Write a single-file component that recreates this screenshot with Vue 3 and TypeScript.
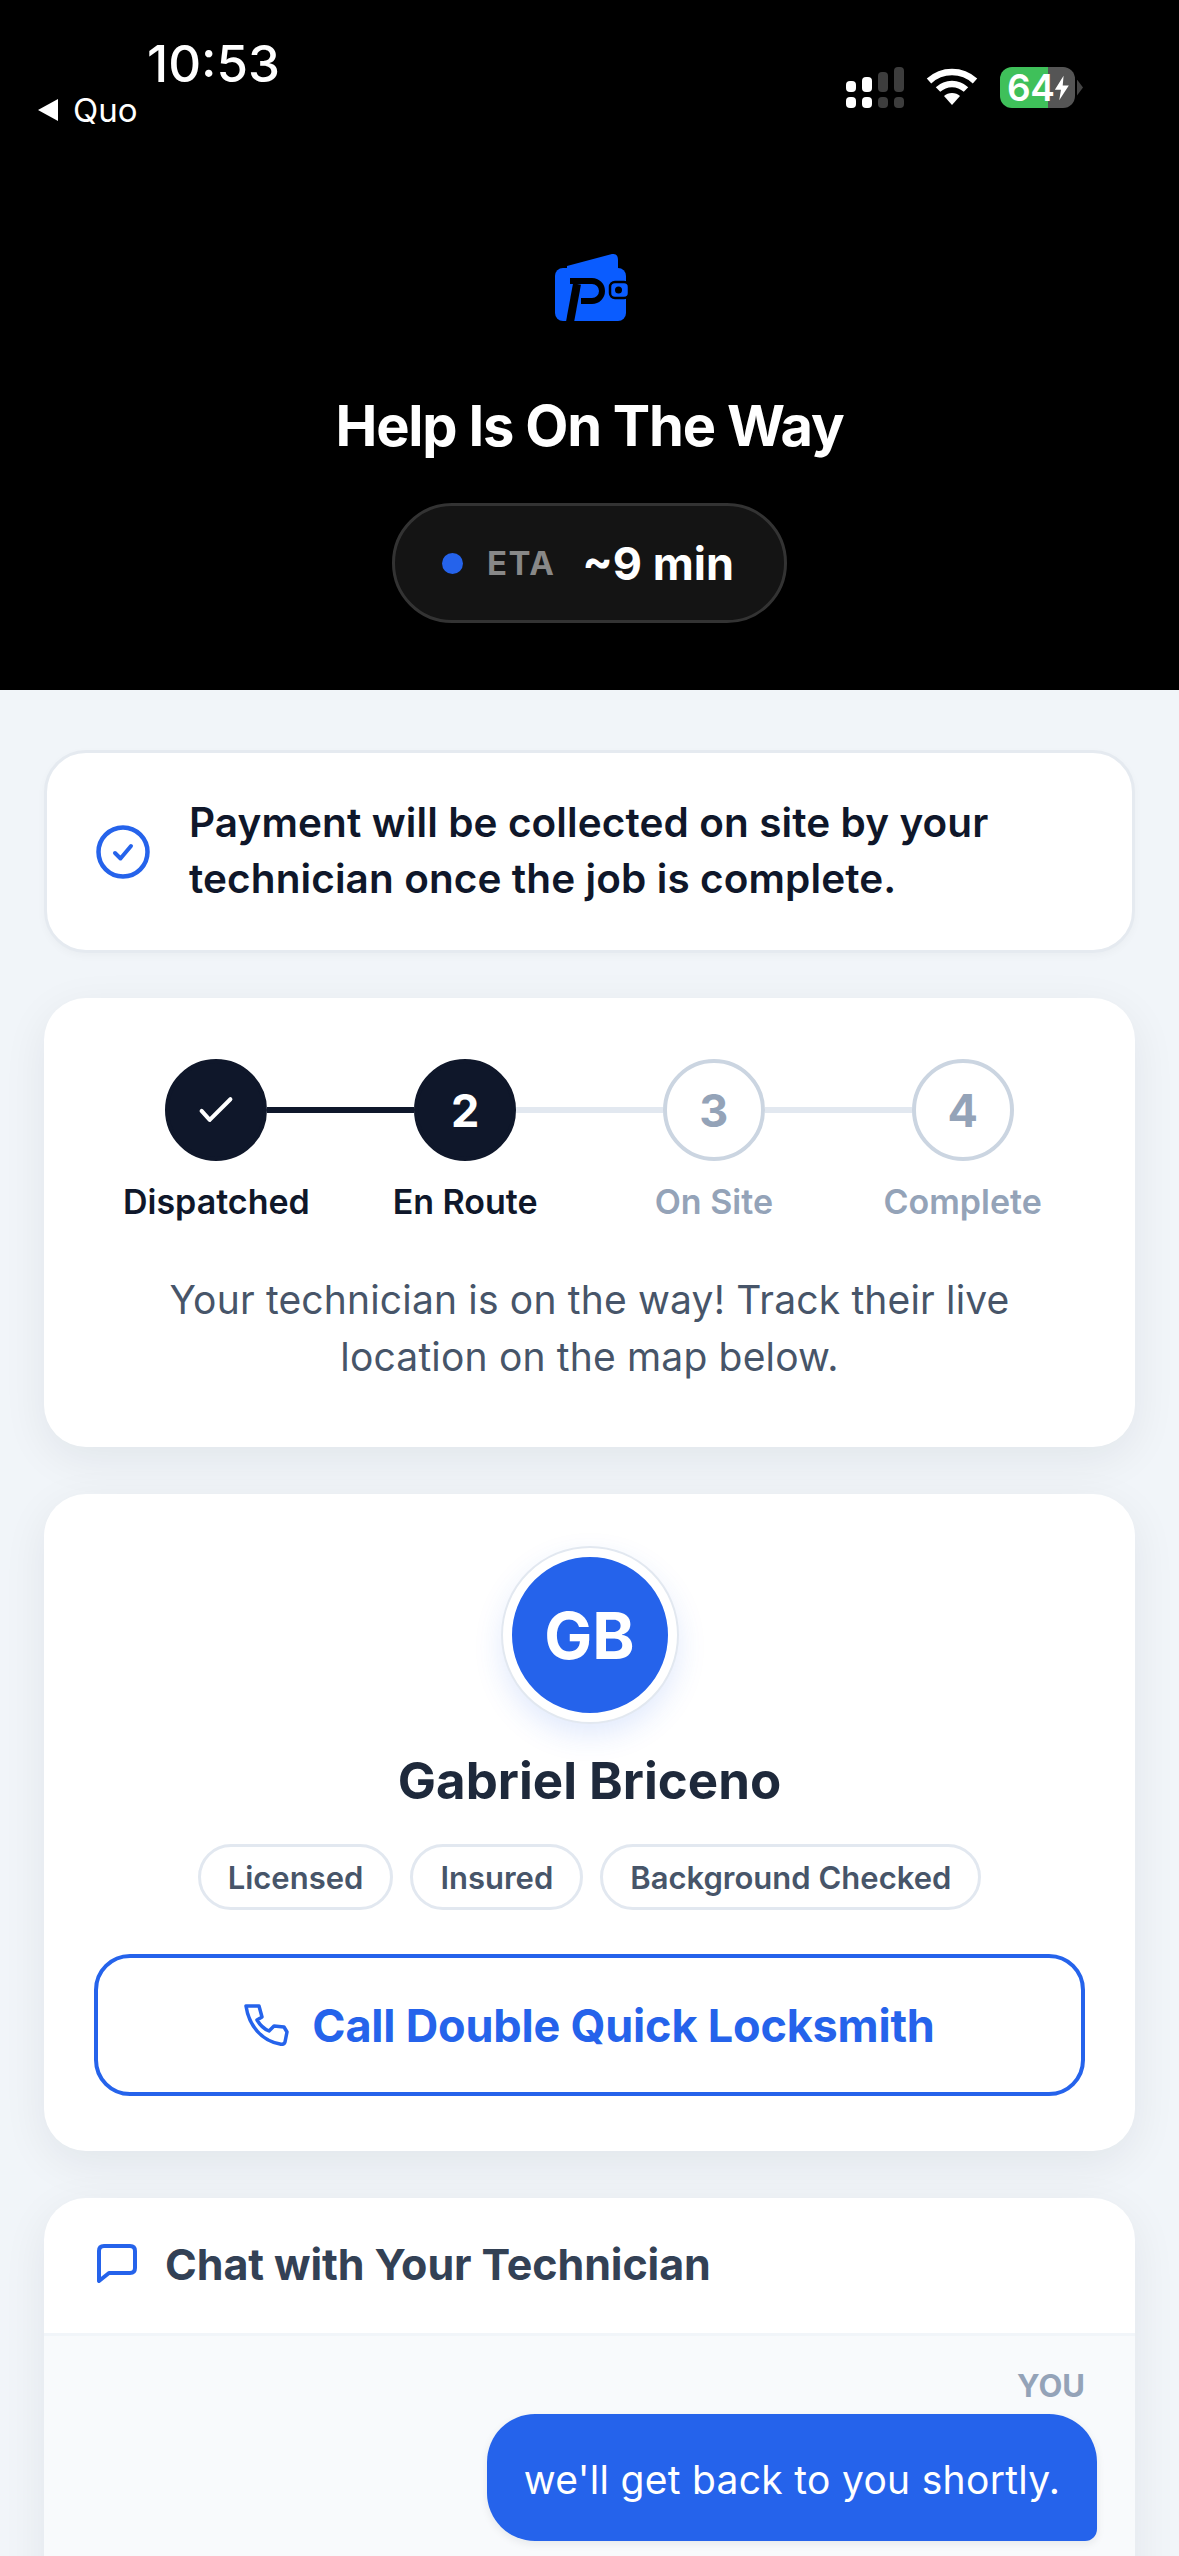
<script setup lang="ts">
interface Step {
  label: string
  mark: string
  state: 'done' | 'current' | 'todo'
}

const steps: Step[] = [
  { label: 'Dispatched', mark: '', state: 'done' },
  { label: 'En Route', mark: '2', state: 'current' },
  { label: 'On Site', mark: '3', state: 'todo' },
  { label: 'Complete', mark: '4', state: 'todo' },
]

const badges = ['Licensed', 'Insured', 'Background Checked']
</script>

<template>
  <div class="page">
    <header class="hero">
      <div class="status">
        <div class="status__left">
          <div class="status__time">10:53</div>
          <div class="status__back"><span class="status__arrow"></span>Quo</div>
        </div>
        <div class="status__right">
          <svg class="signal" width="58" height="41" viewBox="0 0 58 41">
            <rect x="0" y="14" width="10" height="11" rx="4" fill="#fff" />
            <rect x="16" y="10" width="10" height="15" rx="4" fill="#fff" />
            <rect x="32" y="5" width="10" height="20" rx="4" fill="#3d3d3d" />
            <rect x="48" y="0" width="10" height="25" rx="4" fill="#3d3d3d" />
            <rect x="0" y="30" width="10" height="11" rx="4" fill="#fff" />
            <rect x="16" y="30" width="10" height="11" rx="4" fill="#fff" />
            <rect x="32" y="30" width="10" height="11" rx="4" fill="#3d3d3d" />
            <rect x="48" y="30" width="10" height="11" rx="4" fill="#3d3d3d" />
          </svg>
          <svg class="wifi" width="52" height="38" viewBox="0 0 52 38">
            <path d="M3 14 C16 2 36 2 49 14" fill="none" stroke="#fff" stroke-width="6.5" />
            <path d="M12 22.500 C20 15 32 15 40 22.500" fill="none" stroke="#fff" stroke-width="6.5" />
            <path d="M18 29 C22 25 30 25 34 29 L26 38 Z" fill="#fff" />
          </svg>
          <div class="battery">
            <div class="battery__body">
              <span class="battery__num">64</span>
              <svg width="18" height="28" viewBox="0 0 18 28"><path d="M11 0 L1 16 H8 L6 28 L17 11 H10 Z" fill="#fff" /></svg>
            </div>
            <div class="battery__tip"></div>
          </div>
        </div>
      </div>

      <svg class="logo" width="140" height="110" viewBox="0 0 140 110">
        <path d="M47 36 L92 24 Q98 23 98 30 V38 H47 Z" fill="#0a5cff" />
        <rect x="35" y="38" width="71" height="53" rx="8" fill="#0a5cff" />
        <path d="M50 51 H72 a10 10 0 0 1 0 20 H61" fill="none" stroke="#000" stroke-width="6" />
        <path d="M57 54 L50 92" fill="none" stroke="#000" stroke-width="8" />
        <rect x="90" y="52" width="19" height="16" rx="5" fill="#0a5cff" stroke="#000" stroke-width="2.500" />
        <circle cx="98.500" cy="60" r="3.500" fill="#000" />
      </svg>

      <h1 class="hero__title">Help Is On The Way</h1>

      <div class="eta">
        <span class="eta__dot"></span>
        <span class="eta__label">ETA</span>
        <span class="eta__value">~9 min</span>
      </div>
    </header>

    <main class="content">
      <section class="card notice">
        <svg width="54" height="54" viewBox="0 0 54 54" fill="none" stroke="#2563eb" stroke-linecap="round" stroke-linejoin="round">
          <circle cx="27" cy="27" r="24.500" stroke-width="4.500" />
          <path d="M19 28 L24.500 33.500 L35 21" stroke-width="4" />
        </svg>
        <p class="notice__text">Payment will be collected on site by your technician once the job is complete.</p>
      </section>

      <section class="card card--raised progress">
        <div class="steps">
          <div v-for="(step, i) in steps" :key="step.label" class="step" :class="`step--${step.state}`">
            <div class="step__track">
              <span class="step__line" :class="{ 'step__line--off': i === 0, 'step__line--dark': i === 1 }"></span>
              <span class="step__circle">
                <svg v-if="step.state === 'done'" width="36" height="36" viewBox="0 0 40 40" fill="none" stroke="#fff" stroke-width="4.500" stroke-linecap="round" stroke-linejoin="round">
                  <path d="M4 21 L13 31 L36 8" />
                </svg>
                <template v-else>{{ step.mark }}</template>
              </span>
              <span class="step__line" :class="{ 'step__line--off': i === steps.length - 1, 'step__line--dark': i === 0 }"></span>
            </div>
            <div class="step__label">{{ step.label }}</div>
          </div>
        </div>
        <p class="progress__text">Your technician is on the way! Track their live location on the map below.</p>
      </section>

      <section class="card card--raised tech">
        <div class="tech__avatar">GB</div>
        <h2 class="tech__name">Gabriel Briceno</h2>
        <div class="tech__badges">
          <span v-for="badge in badges" :key="badge" class="tech__badge">{{ badge }}</span>
        </div>
        <button class="tech__call">
          <svg width="45" height="42" viewBox="0 0 45 42" fill="none" stroke="#2563eb" stroke-width="3.5" stroke-linejoin="round" stroke-linecap="round">
            <path d="M2 2 H15 L18 13 L13 16 C16 21 20 25 25 27 L30 22 L40 23 L43 28 L41 38 Q40 41 36 40 C18 37 5 22 2 2 Z" />
          </svg>
          Call Double Quick Locksmith
        </button>
      </section>

      <section class="card card--raised chat">
        <div class="chat__head">
          <svg width="42" height="42" viewBox="0 0 42 42" fill="none" stroke="#2563eb" stroke-width="4" stroke-linejoin="round">
            <path d="M3 8 Q3 3 8 3 H34 Q39 3 39 8 V25 Q39 30 34 30 H13 L3 38 Z" />
          </svg>
          <h3 class="chat__title">Chat with Your Technician</h3>
        </div>
        <div class="chat__body">
          <div class="chat__who">YOU</div>
          <div class="chat__bubble">we'll get back to you shortly.</div>
        </div>
      </section>
    </main>
  </div>
</template>

<style scoped>
.page {
  width: 1179px;
  height: 2556px;
  overflow: hidden;
  background: #f1f5f9;
  font-family: Inter, "Noto Sans", sans-serif;
}

.hero {
  height: 690px;
  box-sizing: border-box;
  background: #000;
  color: #fff;
  display: flex;
  flex-direction: column;
  align-items: center;
}
.status {
  align-self: stretch;
  height: 136px;
  display: flex;
  justify-content: space-between;
}
.status__left {
  padding: 36px 0 0 38px;
}
.status__time {
  margin-left: 109px;
  font-size: 51px;
  line-height: 56px;
  font-weight: 500;
  font-family: Inter, sans-serif;
}
.status__back {
  display: flex;
  align-items: center;
  gap: 15px;
  font-size: 33px;
  line-height: 36px;
  margin-top: 0;
}
.status__arrow {
  width: 0;
  height: 0;
  border-top: 11px solid transparent;
  border-bottom: 11px solid transparent;
  border-right: 20px solid #fff;
}
.status__right {
  display: flex;
  align-items: flex-start;
  padding: 67px 96px 0 0;
}
.signal {
  margin-right: 22px;
}
.wifi {
  margin-right: 22px;
}
.battery {
  display: flex;
  align-items: center;
  height: 41px;
}
.battery__body {
  width: 75px;
  height: 41px;
  border-radius: 12px;
  display: flex;
  align-items: center;
  justify-content: space-between;
  box-sizing: border-box;
  padding: 0 5px 0 7px;
  background: linear-gradient(90deg, #3fc05a 64%, #555 64%);
}
.battery__num {
  font-size: 37px;
  font-weight: 600;
  letter-spacing: -0.5px;
}
.battery__tip {
  width: 6px;
  height: 16px;
  margin-left: 2px;
  background: #444;
  clip-path: polygon(0 0, 100% 50%, 0 100%);
}

.logo {
  margin-top: 94px;
  margin-left: 1px;
  height: 110px;
}
.hero__title {
  margin: 52px 0 0;
  font-size: 56px;
  line-height: 68px;
  font-weight: 700;
  letter-spacing: -1.2px;
}
.eta {
  margin-top: 43px;
  width: 395px;
  height: 120px;
  box-sizing: border-box;
  border: 3px solid #333;
  border-radius: 60px;
  background: #141414;
  display: flex;
  align-items: center;
  padding-left: 47px;
}
.eta__dot {
  width: 21px;
  height: 21px;
  border-radius: 50%;
  background: #2563eb;
  margin-right: 24px;
}
.eta__label {
  font-size: 33px;
  font-weight: 700;
  color: #888;
  letter-spacing: 1.5px;
  margin-right: 27px;
}
.eta__value {
  font-size: 45px;
  font-weight: 700;
}

.content {
  padding: 60px 44px 0;
  display: flex;
  flex-direction: column;
  gap: 47px;
}
.card {
  background: #fff;
  border-radius: 42px;
  box-sizing: border-box;
  box-shadow: 0 3px 9px rgba(15, 23, 42, 0.03);
}
.card--raised {
  box-shadow: 0 12px 45px rgba(15, 23, 42, 0.07);
}

.notice {
  height: 203px;
  margin-bottom: -2px;
  border: 3px solid #e5eaf0;
  display: flex;
  align-items: center;
  gap: 39px;
  padding: 0 48px 0 49px;
}
.notice svg {
  flex: none;
}
.notice__text {
  margin: -1px 0 0;
  font-size: 40.5px;
  line-height: 56px;
  letter-spacing: 0.1px;
  font-weight: 600;
  color: #0f172a;
}

.progress {
  height: 449px;
  padding: 61px 48px 0;
}
.steps {
  display: grid;
  grid-template-columns: repeat(4, 1fr);
}
.step__track {
  display: flex;
  align-items: center;
}
.step__line {
  flex: 1;
  height: 6px;
  background: #e2e8f0;
}
.step__line--off {
  background: transparent;
}
.step__line--dark {
  background: #0f172a;
}
.step__circle {
  width: 102px;
  height: 102px;
  box-sizing: border-box;
  border-radius: 50%;
  border: 4px solid #cbd5e1;
  background: #fff;
  color: #94a3b8;
  display: flex;
  align-items: center;
  justify-content: center;
  font-size: 45px;
  font-weight: 700;
}
.step--done .step__circle,
.step--current .step__circle {
  background: #0f172a;
  border-color: #0f172a;
  color: #fff;
}
.step__label {
  margin-top: 20px;
  text-align: center;
  font-size: 34px;
  line-height: 42px;
  font-weight: 600;
  color: #94a3b8;
}
.step--done .step__label,
.step--current .step__label {
  color: #0f172a;
}
.progress__text {
  margin: 48px 0 0;
  text-align: center;
  font-size: 39px;
  line-height: 57px;
  letter-spacing: 0.17px;
  color: #475569;
}

.tech {
  height: 657px;
  padding-top: 54px;
  display: flex;
  flex-direction: column;
  align-items: center;
}
.tech__avatar {
  width: 174px;
  height: 174px;
  box-sizing: border-box;
  border: 9px solid #fff;
  border-radius: 50%;
  background: #2563eb;
  color: #fff;
  font-size: 64px;
  font-weight: 700;
  display: flex;
  align-items: center;
  justify-content: center;
  box-shadow: 0 0 0 2px #e2e8f0, 0 12px 30px rgba(37, 99, 235, 0.15);
}
.tech__name {
  margin: 26px 0 0;
  font-size: 51px;
  line-height: 66px;
  font-weight: 700;
  color: #1e293b;
}
.tech__badges {
  margin-top: 30px;
  display: flex;
  gap: 17px;
}
.tech__badge {
  height: 66px;
  box-sizing: border-box;
  border: 3px solid #e2e8f0;
  border-radius: 33px;
  padding: 0 27px;
  display: flex;
  align-items: center;
  font-size: 31px;
  font-weight: 600;
  color: #475569;
}
.tech__call {
  margin-top: 44px;
  width: 991px;
  height: 142px;
  border: 4.500px solid #2563eb;
  border-radius: 36px;
  background: #fff;
  color: #2563eb;
  font-family: inherit;
  font-size: 45px;
  letter-spacing: -0.2px;
  font-weight: 700;
  display: flex;
  align-items: center;
  justify-content: center;
  gap: 23px;
}

.chat {
  height: 700px;
  overflow: hidden;
}
.chat__head {
  height: 138px;
  box-sizing: border-box;
  border-bottom: 3px solid #f1f5f9;
  display: flex;
  align-items: center;
  gap: 27px;
  padding: 0 0 4px 52px;
}
.chat__title {
  margin: 0;
  font-size: 43px;
  letter-spacing: -0.1px;
  font-weight: 700;
  color: #334155;
}
.chat__body {
  height: 100%;
  background: #f8fafc;
  display: flex;
  flex-direction: column;
  align-items: flex-end;
  padding: 30px 38px 0 0;
}
.chat__who {
  font-size: 31px;
  line-height: 40px;
  font-weight: 700;
  color: #94a3b8;
  margin-right: 12px;
}
.chat__bubble {
  margin-top: 8px;
  box-sizing: border-box;
  height: 127px;
  width: 610px;
  padding-top: 4px;
  display: flex;
  align-items: center;
  justify-content: center;
  border-radius: 48px 48px 12px 48px;
  background: #2563eb;
  color: #fff;
  font-size: 39px;
  letter-spacing: 0.3px;
  box-shadow: 0 3px 9px rgba(15, 23, 42, 0.08);
}
</style>
